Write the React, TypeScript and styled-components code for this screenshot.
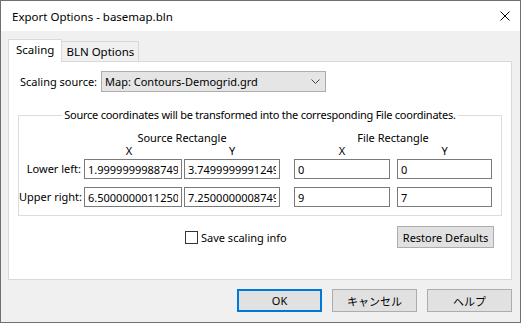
import styled, { createGlobalStyle } from "styled-components";

const GlobalStyle = createGlobalStyle`
  body {
    margin: 0;
    font-family: "Segoe UI", "Noto Sans", "Noto Sans CJK JP", sans-serif;
    font-size: 11px;
    color: #000;
    white-space: nowrap;
  }
`;

const sourceRows = [
  { label: "Lower left:", x: "1.99999999887499", y: "3.74999999912499", fx: "0", fy: "0" },
  { label: "Upper right:", x: "6.50000000112500", y: "7.25000000087499", fx: "9", fy: "7" },
];

const App = () => {
  return (
    <>
      <GlobalStyle />
      <StyledWindow>
        <StyledTitleBar>
          <StyledTitle>Export Options - basemap.bln</StyledTitle>
          <StyledClose aria-label="close">
            <svg width="10" height="10" viewBox="0 0 10 10">
              <path d="M0.5 0.5 L9.5 9.5 M9.5 0.5 L0.5 9.5" stroke="#000" strokeWidth="1" />
            </svg>
          </StyledClose>
        </StyledTitleBar>

        <StyledBody>
          <StyledTabs>
            <StyledTab $active>Scaling</StyledTab>
            <StyledTab>BLN Options</StyledTab>
          </StyledTabs>

          <StyledPanel>
            <StyledSourceRow>
              <StyledSourceLabel>Scaling source:</StyledSourceLabel>
              <StyledCombo>
                <span>Map: Contours-Demogrid.grd</span>
                <svg width="9" height="5" viewBox="0 0 9 5">
                  <path d="M0.5 0.5 L4.5 4.5 L8.5 0.5" fill="none" stroke="#444" strokeWidth="1" />
                </svg>
              </StyledCombo>
            </StyledSourceRow>

            <StyledGroup>
              <StyledLegend>
                Source coordinates will be transformed into the corresponding File coordinates.
              </StyledLegend>
              <StyledGrid>
                <span />
                <StyledHeading $span="2 / 4" $pr={14}>
                  Source Rectangle
                </StyledHeading>
                <StyledHeading $span="4 / 6">File Rectangle</StyledHeading>

                <span />
                <StyledAxis $w={90}>X</StyledAxis>
                <StyledAxis $w={96}>Y</StyledAxis>
                <StyledAxis $w={96}>X</StyledAxis>
                <StyledAxis $w={95}>Y</StyledAxis>

                {sourceRows.map((row) => (
                  <StyledRow key={row.label}>
                    <StyledRowLabel>{row.label}</StyledRowLabel>
                    <StyledInput $w={98} defaultValue={row.x} />
                    <StyledInput $w={96} defaultValue={row.y} />
                    <StyledInput $w={96} defaultValue={row.fx} />
                    <StyledInput $w={95} defaultValue={row.fy} />
                  </StyledRow>
                ))}
              </StyledGrid>
            </StyledGroup>

            <StyledOptionsRow>
              <StyledCheckLabel>
                <StyledCheck />
                Save scaling info
              </StyledCheckLabel>
              <StyledButton $w={97} $h={22}>
                Restore Defaults
              </StyledButton>
            </StyledOptionsRow>
          </StyledPanel>

          <StyledFooter>
            <StyledButton $w={85} $h={23} $default>
              OK
            </StyledButton>
            <StyledButton $w={85} $h={23}>
              キャンセル
            </StyledButton>
            <StyledButton $w={85} $h={23}>
              ヘルプ
            </StyledButton>
          </StyledFooter>
        </StyledBody>
      </StyledWindow>
    </>
  );
};

export default App;

const StyledWindow = styled.div`
  width: 521px;
  height: 323px;
  box-sizing: border-box;
  border: 1px solid #707070;
  display: flex;
  flex-direction: column;
  background: #f0f0f0;
`;

const StyledTitleBar = styled.div`
  height: 30px;
  flex-shrink: 0;
  background: #fff;
  display: flex;
  align-items: center;
  justify-content: space-between;
  padding: 0 10px 0 11px;
`;

const StyledTitle = styled.span`
  font-size: 11.5px;
`;

const StyledClose = styled.div`
  width: 10px;
  height: 10px;
  display: flex;
`;

const StyledBody = styled.div`
  flex: 1;
  padding: 8px 8px 0 7px;
  display: flex;
  flex-direction: column;
`;

const StyledTabs = styled.div`
  display: flex;
  align-items: flex-end;
  height: 22px;
`;

const StyledTab = styled.div<{ $active?: boolean }>`
  box-sizing: border-box;
  height: ${({ $active }) => ($active ? "23px" : "20px")};
  margin-bottom: ${({ $active }) => ($active ? "-1px" : "0")};
  padding: ${({ $active }) => ($active ? "0 7px 2px" : "0 4px")};
  background: ${({ $active }) => ($active ? "#fff" : "#f0f0f0")};
  border: 1px solid #d9d9d9;
  border-bottom: none;
  border-left: ${({ $active }) => ($active ? "1px solid #d9d9d9" : "none")};
  position: relative;
  z-index: ${({ $active }) => ($active ? 1 : 0)};
  display: flex;
  align-items: center;
  line-height: 16px;
  font-size: 11.5px;
`;

const StyledPanel = styled.div`
  box-sizing: border-box;
  height: 219px;
  background: #fff;
  border: 1px solid #d9d9d9;
  padding: 9px 9px 0 9px;
  display: flex;
  flex-direction: column;
`;

const StyledSourceRow = styled.div`
  display: flex;
  align-items: center;
  height: 21px;
  padding-left: 2px;
`;

const StyledSourceLabel = styled.span`
  width: 81px;
`;

const StyledCombo = styled.div`
  box-sizing: border-box;
  width: 225px;
  height: 21px;
  background: #e5e5e5;
  border: 1px solid #adadad;
  display: flex;
  align-items: center;
  justify-content: space-between;
  padding: 0 5px 0 3px;
`;

const StyledGroup = styled.fieldset`
  margin: 15px 0 0;
  padding: 8px 0 8px 0;
  border: 1px solid #dcdcdc;
  min-width: 0;
`;

const StyledLegend = styled.legend`
  margin: 0 auto;
  padding: 0 2px;
  line-height: 16px;
  letter-spacing: -0.25px;
`;

const StyledGrid = styled.div`
  display: grid;
  grid-template-columns: 65px 100px 110px 103px 95px;
  grid-template-rows: 13px 13px 22px 28px;
  line-height: 13px;
`;

const StyledHeading = styled.div<{ $span: string; $pr?: number }>`
  grid-column: ${({ $span }) => $span};
  text-align: center;
  padding-right: ${({ $pr }) => $pr ?? 0}px;
`;

const StyledAxis = styled.div<{ $w: number }>`
  width: ${({ $w }) => $w}px;
  text-align: center;
`;

const StyledRow = styled.div`
  display: contents;
`;

const StyledRowLabel = styled.span`
  align-self: end;
  text-align: right;
  padding-right: 3px;
  line-height: 20px;
`;

const StyledInput = styled.input<{ $w: number }>`
  align-self: end;
  box-sizing: border-box;
  width: ${({ $w }) => $w}px;
  height: 20px;
  border: 1px solid #7a7a7a;
  padding: 0 3px;
  font: inherit;
  color: #000;
  background: #fff;
  outline: none;
`;

const StyledOptionsRow = styled.div`
  display: flex;
  align-items: center;
  justify-content: space-between;
  margin-top: 10px;
  padding: 0 8px 0 167px;
`;

const StyledCheckLabel = styled.label`
  display: flex;
  align-items: center;
  gap: 3px;
`;

const StyledCheck = styled.span`
  box-sizing: border-box;
  width: 13px;
  height: 13px;
  border: 1px solid #333;
  background: #fff;
`;

const StyledFooter = styled.div`
  display: flex;
  justify-content: flex-end;
  gap: 10px;
  margin-top: 9px;
`;

const StyledButton = styled.button<{ $w: number; $h: number; $default?: boolean }>`
  box-sizing: border-box;
  width: ${({ $w }) => $w}px;
  height: ${({ $h }) => $h}px;
  background: #e1e1e1;
  border: ${({ $default }) => ($default ? "2px solid #0078d7" : "1px solid #adadad")};
  font: inherit;
  color: #000;
  padding: 0;
`;
